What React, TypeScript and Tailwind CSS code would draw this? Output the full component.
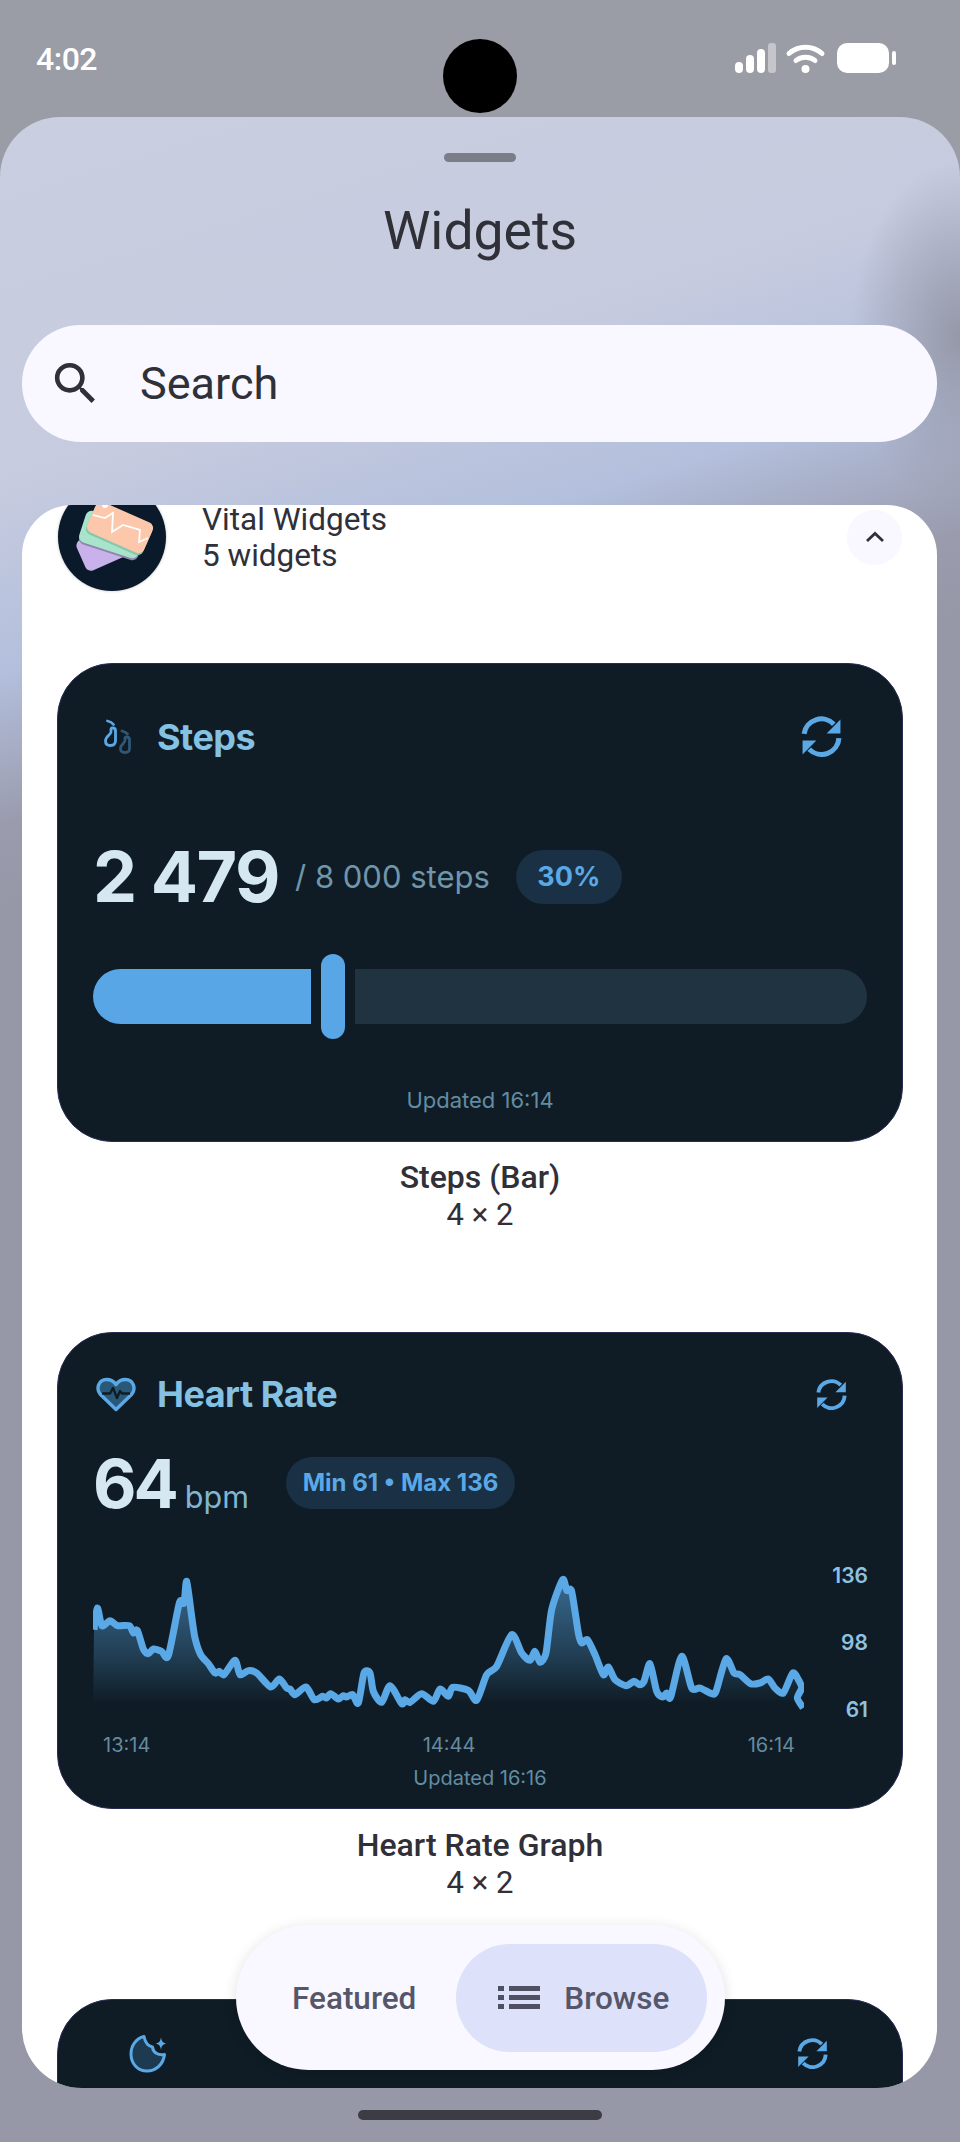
const hrPoints =
  "42,210 52,145 66,198 90,183 112,198 148,198 160,220 172,212 190,268 205,282 220,268 245,275 265,288 298,130 312,130 320,65 335,170 345,235 362,285 385,312 405,340 418,335 432,345 465,302 480,345 505,333 530,340 572,382 598,358 620,385 630,388 645,405 678,382 703,420 728,410 740,415 752,402 775,418 790,408 800,412 818,405 835,430 852,340 870,340 880,395 905,428 930,378 965,432 975,420 990,428 1025,402 1060,425 1080,388 1105,410 1118,383 1165,392 1190,422 1220,345 1250,320 1295,225 1325,280 1350,302 1365,275 1380,308 1398,280 1415,150 1448,60 1460,92 1475,95 1495,220 1505,250 1522,240 1545,285 1570,345 1585,322 1605,360 1638,378 1662,365 1678,375 1692,365 1710,312 1730,395 1748,412 1760,400 1772,412 1805,290 1835,385 1860,385 1895,402 1908,395 1938,298 1962,340 1980,345 2012,372 2040,370 2065,358 2085,385 2110,400 2138,340 2155,360 2165,385 2152,415 2170,445"
    .split(" ")
    .map((p) => p.split(",").map(Number));

// catmull-rom through the samples so the line doesn't look faceted
function smoothLine(pts: number[][]) {
  let d = `M${pts[0][0]} ${pts[0][1]}`;
  for (let i = 0; i < pts.length - 1; i++) {
    const a = pts[Math.max(i - 1, 0)];
    const b = pts[i];
    const c = pts[i + 1];
    const e = pts[Math.min(i + 2, pts.length - 1)];
    const c1x = b[0] + (c[0] - a[0]) / 8;
    const c1y = b[1] + (c[1] - a[1]) / 8;
    const c2x = c[0] - (e[0] - b[0]) / 8;
    const c2y = c[1] - (e[1] - b[1]) / 8;
    d += `C${c1x} ${c1y} ${c2x} ${c2y} ${c[0]} ${c[1]}`;
  }
  return d;
}

const hrLine = smoothLine(hrPoints);

function RefreshIcon({ size }: { size: number }) {
  return (
    <svg width={size} height={size} viewBox="0 0 40 40" fill="none">
      <path d="M3 17.5A17 17 0 0 1 32 8" stroke="#5aa9e6" strokeWidth="5" />
      <path d="M37 21.5A17 17 0 0 1 8 32.5" stroke="#5aa9e6" strokeWidth="5" />
      <path d="M38.5 3.5V17H25Z" fill="#5aa9e6" />
      <path d="M1.5 37.5V24H15Z" fill="#5aa9e6" />
    </svg>
  );
}

function StepsIcon() {
  return (
    <svg width="30" height="37" viewBox="0 0 30 37" fill="none" strokeLinecap="round">
      <path d="M8 11V14C8 16.500 2.500 18 2.500 23 2.500 26 4.500 27.500 7.500 27.500 10.500 27.500 12.500 26 12.500 22.500V12.500C12.500 9.500 8 9 8 11Z" stroke="#5aa9e6" strokeWidth="2.800" />
      <path d="M4.500 3C7 3.500 9 4.500 10.500 6.500" stroke="#5aa9e6" strokeWidth="2.800" />
      <path d="M22 20V22.500C22 25 17.500 26.500 17.500 30.500 17.500 33.500 19.500 34.500 22 34.500 24.500 34.500 26.500 33.500 26.500 30.500V21.500C26.500 18.500 22 18 22 20Z" stroke="#2f5877" strokeWidth="2.800" />
      <path d="M19 13C21 13.500 23 14.500 24.500 16" stroke="#2f5877" strokeWidth="2.800" />
    </svg>
  );
}

function HeartIcon() {
  return (
    <svg width="40" height="35" viewBox="0 0 40 35" fill="none">
      <path d="M20 32.500 4.500 17.500C-.5 12 2.500 2.500 10.500 2.500 14.500 2.500 18 4.500 20 7.500 22 4.500 25.500 2.500 29.500 2.500 37.500 2.500 40.500 12 35.500 17.500Z" fill="#2a5878" stroke="#5aa9e6" strokeWidth="3.400" strokeLinejoin="round" />
      <path d="M6 16.500H14L17 11 21 21 24 14 26 16.500H34" stroke="#0f1c25" strokeWidth="2.400" strokeLinejoin="round" />
    </svg>
  );
}

function MoonIcon() {
  return (
    <svg width="38" height="39" viewBox="0 0 38 39" fill="none">
      <path d="M15 2.500C7 4.500 2 11.500 2 20 2 30 9 37 18 37 27 37 34.500 30 35.500 20.500 29 21.500 24 18.500 23.500 13 19 12 16 8 15 2.500Z" fill="#1d3a50" stroke="#5aa9e6" strokeWidth="3" strokeLinejoin="round" />
      <path d="M32 3C32.500 7 33.500 8.500 37 9.500 33.500 10.500 32.500 12 32 16 31.500 12 30.500 10.500 27 9.500 30.500 8.500 31.500 7 32 3Z" fill="#5aa9e6" />
    </svg>
  );
}

function AppLogo() {
  return (
    <div className="w-[108px] h-[108px] ml-px shrink-0 rounded-full bg-[#0a1a2b] shadow-[0_0_3px_rgba(0,0,0,0.25)] overflow-hidden">
      <svg width="108" height="108" viewBox="0 0 108 108" fill="none">
        <rect x="20.500" y="45.500" width="62" height="33" rx="6" transform="rotate(-24 51.500 62)" fill="#c9b2ec" />
        <rect x="23" y="37" width="62" height="33" rx="6" transform="rotate(18 54 53.500)" fill="#8f86ad" />
        <rect x="23" y="35" width="62" height="33" rx="6" transform="rotate(18 54 51.500)" fill="#a8e4cc" />
        <rect x="30" y="30" width="62" height="33" rx="6" transform="rotate(24 61 46.500)" fill="#86c8ac" />
        <rect x="31" y="28" width="62" height="33" rx="6" transform="rotate(24 62 44.500)" fill="#fcc7ab" />
        <polyline points="35,32 47,35 55,30 54,49 65,42 82,47 81,59 90,55" stroke="#fff" strokeWidth="1.800" />
        <circle cx="47" cy="22" r="3" fill="#fff" />
      </svg>
    </div>
  );
}

function Caption({ title, className }: { title: string; className: string }) {
  return (
    <div className={`${className} text-center text-[31px] leading-[37px] text-[#2f3038]`}>
      <div className="font-medium text-[32px]">{title}</div>
      <div>4 × 2</div>
    </div>
  );
}

export default function App() {
  return (
    <div className="relative w-[960px] h-[2142px] overflow-hidden flex flex-col bg-[#9a9ca6] font-[Roboto,sans-serif]">
      {/* status bar */}
      <div className="h-[117px] shrink-0 flex justify-between pl-[36px] pr-[63px] pt-[39px]">
        <span className="text-white font-medium text-[32px] leading-[40px] tracking-[-0.5px]">4:02</span>
        <svg width="162" height="32" viewBox="0 0 162 32" fill="none" className="mt-[3px]">
          <rect x="0" y="20" width="8" height="11" rx="4" fill="#fff" />
          <rect x="11" y="13" width="8" height="18" rx="4" fill="#fff" />
          <rect x="22" y="7" width="8" height="24" rx="4" fill="#fff" />
          <rect x="33" y="1" width="8" height="30" rx="3" fill="#c4c6cb" />
          <path d="M54 11.500C63 3 78 3 87 11.500" stroke="#fff" strokeWidth="5" strokeLinecap="round" />
          <path d="M61 18.500C66 14 75 14 80 18.500" stroke="#fff" strokeWidth="5" strokeLinecap="round" />
          <circle cx="70.500" cy="27" r="4" fill="#fff" />
          <rect x="102" y="1" width="52" height="30" rx="10" fill="#fff" />
          <rect x="157" y="9" width="4" height="14" rx="2" fill="#fff" />
        </svg>
      </div>

      {/* bottom sheet */}
      <div className="flex-1 flex flex-col rounded-t-[60px] bg-[radial-gradient(ellipse_110px_175px_at_100%_220px,#9698a8,#9698a800),linear-gradient(163deg,#c9cee0_0%,#c6cbdf_16%,#b3bfdc_24%,#9a9cae_30.500%,#9698a8_34%,#9698a8_100%)]">
        <div className="mt-[36px] mx-auto w-[72px] h-[9px] rounded-full bg-[#7b7d89]" />
        <div className="mt-[39px] text-center text-[53.500px] leading-[60px] text-[#2f3038]">Widgets</div>

        <div className="mt-[64px] ml-[22px] mr-[23px] h-[117px] shrink-0 flex items-center rounded-full bg-[#f9f7ff] pl-[26px]">
          <svg width="55" height="55" viewBox="0 0 24 24" fill="#2f3038">
            <path d="M15.500 14h-.79l-.28-.27A6.471 6.471 0 0 0 16 9.500 6.500 6.500 0 1 0 9.500 16c1.610 0 3.090-.59 4.230-1.570l.27.28v.79l5 4.990L20.490 19l-4.990-5zm-6 0C7.010 14 5 11.990 5 9.500S7.010 5 9.500 5 14 7.010 14 9.500 11.990 14 9.500 14z" />
          </svg>
          <span className="ml-[37px] text-[45px] text-[#2f3038]">Search</span>
        </div>

        {/* scrolled white card */}
        <div className="mt-[63px] ml-[22px] mr-[23px] h-[1583px] shrink-0 overflow-hidden rounded-t-[50px] rounded-b-[60px] bg-white pl-[35px] pr-[34px]">
          <div className="-mt-[22px] flex items-center justify-between">
            <div className="flex items-center gap-[36px]">
              <AppLogo />
              <div className="pt-[2px] text-[31.500px] leading-[36px] text-[#2f3038]">
                <div>Vital Widgets</div>
                <div>5 widgets</div>
              </div>
            </div>
            <div className="w-[55px] h-[55px] mr-px rounded-full bg-[#f9f7ff] flex items-center justify-center">
              <svg width="20" height="12" viewBox="0 0 20 12" fill="none">
                <path d="M2 10 10 2.500 18 10" stroke="#2f3038" strokeWidth="2.800" />
              </svg>
            </div>
          </div>

          {/* Steps */}
          <div className="mt-[72px] h-[479px] rounded-[55px] border-[1.500px] border-[#2a2b55] bg-[#0f1c25] px-[35px] pt-[51px] font-[Inter,sans-serif]">
            <div className="flex items-center justify-between pl-[10px] pr-[25px]">
              <div className="flex items-center gap-[24px]">
                <StepsIcon />
                <span className="pt-[2px] text-[36px] leading-[41px] font-bold text-[#84c1e2] tracking-[-0.5px]">Steps</span>
              </div>
              <RefreshIcon size={41} />
            </div>
            <div className="mt-[92px] flex items-center h-[54px]">
              <span className="text-[70px] leading-[54px] font-bold text-[#d5e8f2] tracking-[-1.500px] mr-[16px]">2 479</span>
              <span className="text-[31px] text-[#6f96ab]">/ 8 000 steps</span>
              <span className="ml-[26px] h-[54px] w-[106px] rounded-full bg-[#1a3044] flex items-center justify-center text-[27px] font-bold text-[#5aa9e6]">30%</span>
            </div>
            <div className="mt-[50px] h-[85px] flex items-center gap-[10px]">
              <div className="w-[219px] h-[55px] rounded-l-full bg-[#58a6e6]" />
              <div className="w-[24px] h-[85px] rounded-full bg-[#58a6e6]" />
              <div className="w-[514px] h-[55px] rounded-r-full bg-[#203341]" />
            </div>
            <div className="mt-[47px] text-center text-[22px] leading-[28px] text-[#638ca2]">Updated 16:14</div>
          </div>
          <Caption title="Steps (Bar)" className="mt-[17px]" />

          {/* Heart rate */}
          <div className="mt-[99px] h-[477px] rounded-[55px] border-[1.500px] border-[#2a2b55] bg-[#0f1c25] px-[35px] pt-[41px] font-[Inter,sans-serif]">
            <div className="h-[40px] flex items-center justify-between pl-[3px] pr-[20px]">
              <div className="flex items-center gap-[21px]">
                <HeartIcon />
                <span className="text-[36px] leading-[40px] font-bold text-[#84c1e2] tracking-[-0.5px]">Heart Rate</span>
              </div>
              <RefreshIcon size={31} />
            </div>
            <div className="mt-[43px] h-[52px] flex items-center">
              <div className="self-start pt-px flex items-baseline gap-[9px] w-[193px]">
                <span className="text-[67px] leading-[52px] font-bold text-[#d5e8f2] tracking-[-3px]">64</span>
                <span className="text-[30.500px] leading-[52px] text-[#81b6d3]">bpm</span>
              </div>
              <span className="h-[52px] w-[229px] rounded-full bg-[#1a3044] flex items-center justify-center text-[24px] font-bold text-[#5aa9e6]">Min 61 • Max 136</span>
            </div>
            <div className="mt-[55px] h-[158px] flex justify-between">
              <svg width="711" height="140" viewBox="39 40 2133 420" fill="none" className="mt-[9px]">
                <defs>
                  <linearGradient id="hrFill" x1="0" y1="60" x2="0" y2="430" gradientUnits="userSpaceOnUse">
                    <stop offset="0" stopColor="#5aa9e6" stopOpacity="0.55" />
                    <stop offset="0.6" stopColor="#5aa9e6" stopOpacity="0.25" />
                    <stop offset="1" stopColor="#5aa9e6" stopOpacity="0" />
                  </linearGradient>
                </defs>
                <path d={`${hrLine}L2172 430L39 430Z`} fill="url(#hrFill)" />
                <path d={hrLine} stroke="#5aa9e6" strokeWidth="21" strokeLinejoin="round" />
              </svg>
              <div className="-mr-px flex flex-col justify-between items-end text-[21px] leading-[24px] font-semibold text-[#8dc2e0]">
                <span>136</span>
                <span>98</span>
                <span>61</span>
              </div>
            </div>
            <div className="mt-[11px] ml-[10px] w-[692px] flex justify-between text-[20px] leading-[24px] text-[#648ba0]">
              <span>13:14</span>
              <span>14:44</span>
              <span>16:14</span>
            </div>
            <div className="mt-[9px] text-center text-[20px] leading-[24px] text-[#638ca2]">Updated 16:16</div>
          </div>
          <Caption title="Heart Rate Graph" className="mt-[18px]" />

          {/* third widget, cut off by the card */}
          <div className="mt-[98px] h-[200px] rounded-t-[55px] border-[1.500px] border-[#2a2b55] bg-[#0f1c25] pt-[34px] pl-[71px] pr-[74px] flex items-start justify-between">
            <MoonIcon />
            <div className="mt-[4px]">
              <RefreshIcon size={31} />
            </div>
          </div>
        </div>

        <div className="mt-[22px] mx-auto w-[244px] h-[10px] rounded-full bg-[#3c3c44]" />
      </div>

      {/* camera cutout */}
      <div className="absolute left-[443px] top-[39px] w-[74px] h-[74px] rounded-full bg-black" />

      {/* floating nav */}
      <div className="absolute left-[236px] top-[1925px] w-[489px] h-[145px] rounded-full bg-[#f9f7ff] shadow-[0_2px_14px_rgba(0,0,0,0.12)] flex items-center pl-[56px] text-[31.500px] font-medium text-[#55566a]">
        <span className="pt-[3px]">Featured</span>
        <div className="ml-[40px] w-[251px] h-[108px] rounded-full bg-[#dde1f9] flex items-center pl-[42px] gap-[24px]">
          <svg width="42" height="23" viewBox="0 0 42 23" fill="#4f5064">
            <rect x="0" y="0" width="6" height="5" />
            <rect x="0" y="9" width="6" height="5" />
            <rect x="0" y="18" width="6" height="5" />
            <rect x="11" y="0" width="31" height="5" />
            <rect x="11" y="9" width="31" height="5" />
            <rect x="11" y="18" width="31" height="5" />
          </svg>
          <span className="pt-[3px]">Browse</span>
        </div>
      </div>
    </div>
  );
}
